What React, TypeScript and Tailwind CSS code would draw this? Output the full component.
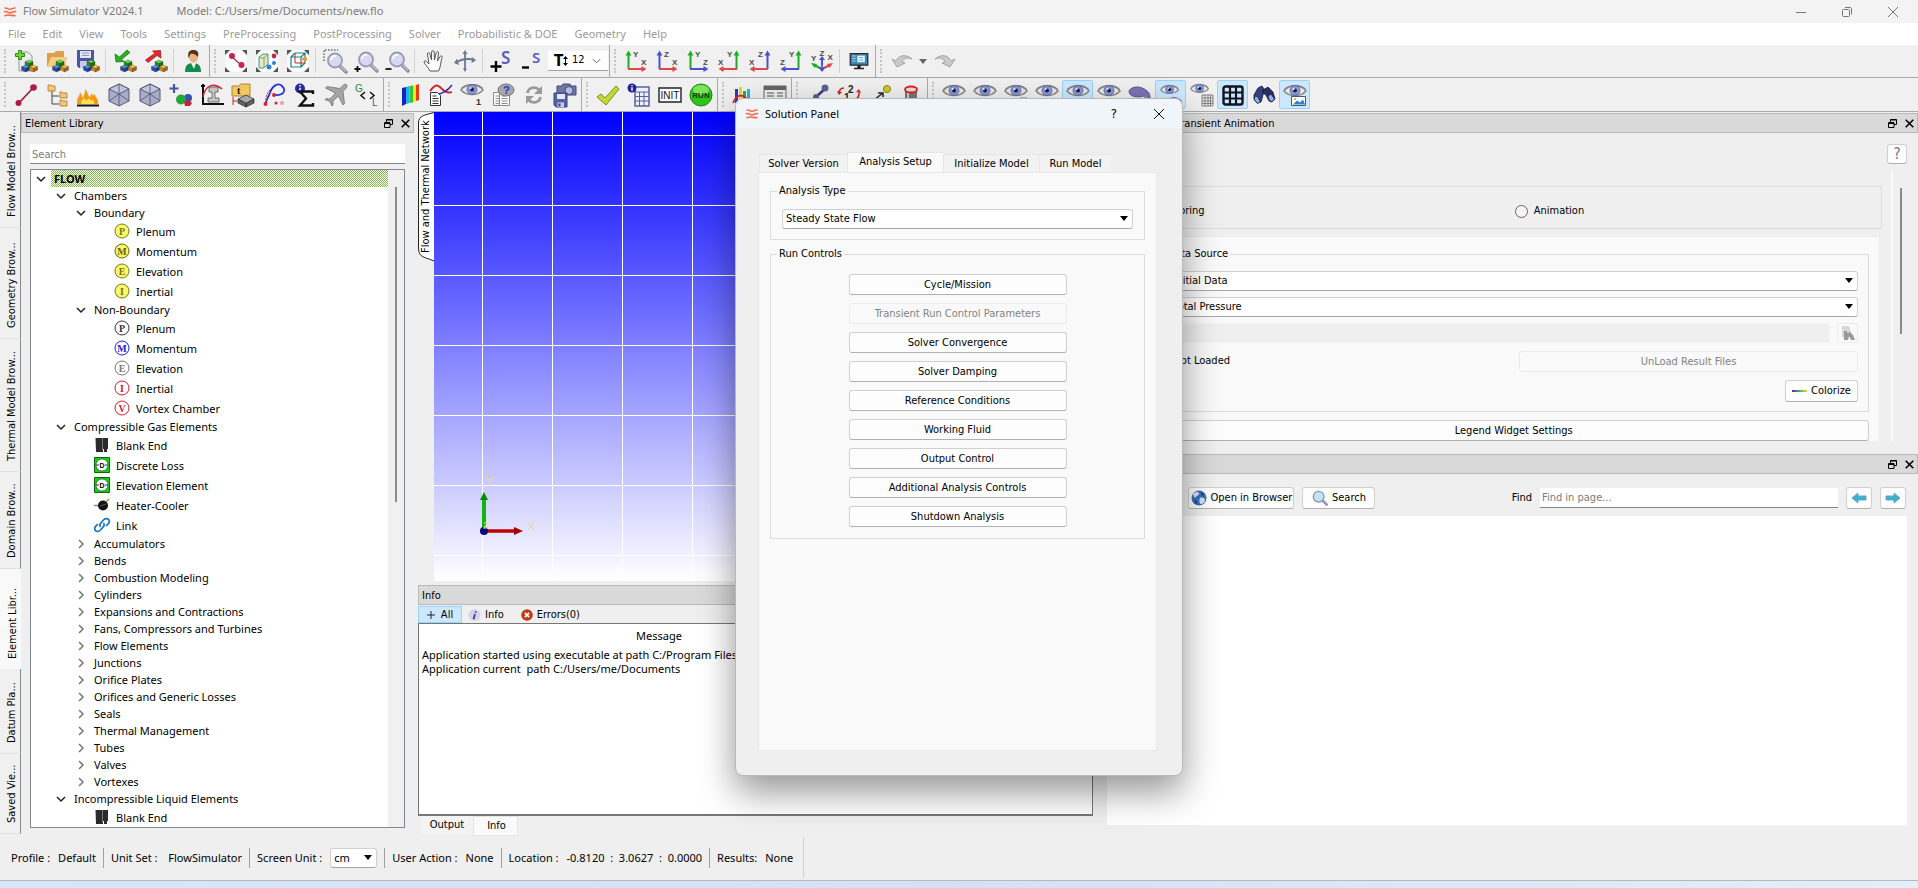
import { useState } from 'react';
import type { ReactNode } from 'react';
import clsx from 'clsx';

/* ---------- icon parts ---------- */

const Svg = ({ children, className = 'h-6 w-6' }: { children: ReactNode; className?: string }) => (
    <svg viewBox="0 0 24 24" fill="none" className={clsx('shrink-0 overflow-visible', className)} aria-hidden="true">
        {children}
    </svg>
);

const Block = ({ x, y, top, left, right }: { x: number; y: number; top: string; left: string; right: string }) => (
    <g stroke="#222" strokeWidth="0.3">
        <path d={`M${x} ${y - 3.4}l4 1.6-4 1.8-4-1.8z`} fill={top} />
        <path d={`M${x - 4} ${y - 1.8}l4 1.8v3.4l-4-1.8z`} fill={left} />
        <path d={`M${x + 4} ${y - 1.8}l-4 1.8v3.4l4-1.8z`} fill={right} />
    </g>
);

const Blocks = () => (
    <>
        <Block x={15} y={14.5} top="#5fe04a" left="#1e9a1a" right="#137510" />
        <Block x={11.5} y={19.5} top="#5b8fe8" left="#1d4fb4" right="#123a8c" />
        <Block x={19.5} y={19.5} top="#ffc24a" left="#d98a10" right="#a96505" />
    </>
);

const EyeShape = () => (
    <>
        <path d="M1 11C5 5 18 4 23 11 18 17 6 17 1 11z" fill="#e9e9ee" stroke="#8a8a8a" strokeWidth="1.5" />
        <path d="M1 9.5C6 4 18 4 23 9.5" stroke="#777" strokeWidth="1" />
        <circle cx="12" cy="10.5" r="5" fill="#8898d0" stroke="#5a659c" strokeWidth="0.8" />
        <circle cx="12" cy="10.5" r="2" fill="#1b1d52" />
        <circle cx="10.6" cy="9" r="1" fill="#fff" />
    </>
);

const Lens = () => (
    <>
        <path d="M15.5 15.5l6.5 6.5" stroke="#8b8b9c" strokeWidth="3.4" strokeLinecap="round" />
        <path d="M16.5 16l5 5" stroke="#c4c4d2" strokeWidth="1.2" strokeLinecap="round" />
        <circle cx="11" cy="10.5" r="7" fill="#d7d9f3" stroke="#9a9ab4" strokeWidth="1.8" />
        <path d="M6.8 9.5a4.6 4.6 0 0 1 5-3.6" stroke="#fff" strokeWidth="1.6" strokeLinecap="round" />
    </>
);

const Corners = () => (
    <>
        <rect x="1.5" y="1.5" width="21" height="21" rx="7" fill="#fff" />
        <g fill="#555">
            <path d="M1 1h5L1 6zM23 1h-5l5 5zM1 23h5l-5-5zM23 23h-5l5-5z" />
        </g>
    </>
);

const GREEN = '#18b020';
const RED = '#e0464c';
const BLUE = '#4a50d0';

interface AxesProps {
    up: string;
    side: string;
    upColor: string;
    sideColor: string;
    flip?: boolean;
}

const Axes = ({ up, side, upColor, sideColor, flip }: AxesProps) => (
    <Svg>
        <g transform={flip ? 'translate(24 0) scale(-1 1)' : undefined}>
            <path d="M4.5 20V5" stroke={upColor} strokeWidth="2" />
            <path d="M1.5 6.5l3-5 3 5z" fill={upColor} />
            <path d="M4 20h14" stroke={sideColor} strokeWidth="2" />
            <path d="M17.5 17l5 3-5 3z" fill={sideColor} />
        </g>
        <g fill="#4a4a4a" fontFamily="Liberation Sans" fontWeight="700" fontSize="8">
            <text x={flip ? 10 : 9} y="8">{up}</text>
            <text x={flip ? 1 : 17} y="16">{side}</text>
        </g>
    </Svg>
);

const Cube = () => (
    <Svg>
        <path d="M12 1l10 5v12l-10 5-10-5V6z" fill="#a9abc9" stroke="#555a78" />
        <path d="M12 1l10 5-10 5L2 6z" fill="#c3c5dc" stroke="#555a78" />
        <path d="M12 11v12M12 11V1M2 18l10-7 10 7" stroke="#555a78" strokeWidth="0.9" />
    </Svg>
);

const WaveLogo = ({ className }: { className?: string }) => (
    <svg viewBox="0 0 16 12" className={clsx('shrink-0', className)} fill="none" stroke="#f4694b" strokeWidth="1.9" aria-hidden="true">
        <path d="M1.500 1.500C4 .5 5.500 2.800 8 2.800s4-2.300 6.500-1.300M.5 5.800C4 4.300 5.500 7 8 7s4-2.700 7.500-1.200M1.500 10.800C4 9.200 6 9.500 8 10s4-.8 6.500.8" />
    </svg>
);

const FloppyShape = ({ x = 0, y = 0 }: { x?: number; y?: number }) => (
    <g transform={`translate(${x} ${y})`}>
        <path d="M1 1h13v14H3l-2-2z" fill="#5560a8" stroke="#3a4280" />
        <path d="M4 2h8v5H4z" fill="#e6e8f6" />
        <path d="M4.500 10.500h6.500V15H4.500z" fill="#c9cdf0" />
        <path d="M5.500 11.500h2v3h-2z" fill="#333a78" />
    </g>
);

const PageShape = ({ x, y, color = '#333' }: { x: number; y: number; color?: string }) => (
    <g transform={`translate(${x} ${y})`} stroke={color}>
        <path d="M.5.500h7l3 3v10H.5z" fill="#fff" />
        <path d="M2.500 4h4M2.500 6.500h6M2.500 9h6M2.500 11.500h6" strokeWidth="1.100" />
    </g>
);

const icons: Record<string, ReactNode> = {
    newModel: (
        <Svg>
            <path d="M5 3h9l4 4v15H5z" fill="#ececec" stroke="#999" />
            <path d="M4.500 1.500h3v3h3v3h-3v3h-3v-3h-3v-3h3z" fill="#6fd235" stroke="#2f8a13" />
            <Blocks />
        </Svg>
    ),
    openModel: (
        <Svg>
            <path d="M2 4h7l2-2h8v6h3l-3 10H2z" fill="#d9a14b" />
            <path d="M2 18l4-10h16l-4 10z" fill="#f5cf86" />
            <Blocks />
        </Svg>
    ),
    saveModel: (
        <Svg>
            <path d="M1 1h17v18H3l-2-2z" fill="#4b569c" />
            <path d="M4 2h11v7H4z" fill="#e4e6f4" />
            <path d="M6 4h7M6 6.500h7" stroke="#8d93bd" />
            <path d="M4 12h7v7H4z" fill="#c6cbec" />
            <Blocks />
        </Svg>
    ),
    importModel: (
        <Svg>
            <path d="M2 5l1 8 8-.5-2.300-2.200L17 3.500 14 1 6.500 8z" fill="#27b21d" stroke="#146b0e" strokeWidth="0.7" />
            <Blocks />
        </Svg>
    ),
    exportModel: (
        <Svg>
            <path d="M17 9l-.5-7.500-8 .5L11 4.200 1.500 11 4 13.500l9-7z" fill="#e3282c" stroke="#8d1215" strokeWidth="0.7" />
            <Blocks />
        </Svg>
    ),
    user: (
        <Svg>
            <path d="M4 23c0-7 3-9 8-9s8 2 8 9z" fill="#168c4c" />
            <path d="M10 14h5l-2 6z" fill="#f2f2f2" />
            <ellipse cx="12.500" cy="8" rx="4.500" ry="5.800" fill="#e9b184" />
            <path d="M7.500 9C6 3 9 .5 13 1c4.500.3 5 4 3.800 7C15 5 11 4 9.500 5z" fill="#5a3413" />
        </Svg>
    ),
    fitNodes: (
        <Svg>
            <Corners />
            <path d="M7 7l10 9" stroke="#a0304c" strokeWidth="1.200" />
            <circle cx="8" cy="7" r="3" fill="#c8244c" />
            <circle cx="17.500" cy="16" r="3" fill="#c8244c" />
        </Svg>
    ),
    fitAll: (
        <Svg>
            <Corners />
            <path d="M4 8l4-3h5v10l-4 4H4z" fill="#d5ecd5" stroke="#2a9a8e" />
            <path d="M9 9v10M4 9h5l4-4" stroke="#d08a2c" />
            <circle cx="19" cy="7" r="2.400" fill="#c8244c" />
            <circle cx="14" cy="18" r="2.500" fill="#2a7fe0" />
            <circle cx="19" cy="14" r="2" fill="#2a7fe0" />
        </Svg>
    ),
    fitGeometry: (
        <Svg>
            <Corners />
            <path d="M5 8h10v10H5zM5 8l4-4h10v10l-4 4M15 8l4-4" stroke="#16808c" strokeWidth="1.200" />
            <path d="M9 4v10h10" stroke="#c22" />
            <path d="M15 10h6" stroke="#f0a018" strokeWidth="3" />
        </Svg>
    ),
    zoomBox: (
        <Svg>
            <g transform="translate(1 1)"><Lens /></g>
            <path d="M1 12V1h14" stroke="#222" strokeDasharray="1.500 1.500" />
        </Svg>
    ),
    zoomIn: (
        <Svg>
            <g transform="translate(1 0)"><Lens /></g>
            <path d="M3.500 17v6M.5 20h6" stroke="#111" strokeWidth="1.800" />
        </Svg>
    ),
    zoomOut: (
        <Svg>
            <g transform="translate(1 0)"><Lens /></g>
            <path d="M.5 20h6" stroke="#111" strokeWidth="1.800" />
        </Svg>
    ),
    pan: (
        <Svg>
            <path
                d="M8 22c-1-3-5-6-6-9 0-1.500 2-1.500 3 0l2 2L5.500 5c0-1.800 2-1.800 2.400 0L9.500 11 9.600 3c0-1.800 2.400-1.800 2.500 0l.4 8 1.800-7.500c.5-1.600 2.500-1.200 2.200.5L15.500 12l2.500-4.500c1-1.300 2.700-.4 2 1.200-1.500 4-1 9-3.500 13.300z"
                fill="#fff"
                stroke="#555"
            />
        </Svg>
    ),
    rotate: (
        <Svg>
            <g stroke="#6c7894" strokeWidth="1.800">
                <path d="M12 3v18M3 14c4-4 13-5 19-3" />
            </g>
            <path d="M9.500 5L12 1l2.500 4zM10 19.500l2 3.500 2-3.500zM4 9.500L1 14l5 2zM19 8l4 3.500-4.500 2.500z" fill="#6c7894" />
        </Svg>
    ),
    sizeUp: (
        <Svg>
            <path d="M6 12v11M.5 17.500h11" stroke="#000" strokeWidth="2.400" />
            <text x="11" y="15" fontFamily="Noto Sans" fontSize="17" fontWeight="600" fill="#5a5ec0">S</text>
        </Svg>
    ),
    sizeDown: (
        <Svg>
            <path d="M1 18.500h7" stroke="#000" strokeWidth="2.400" />
            <text x="11" y="14" fontFamily="Noto Sans" fontSize="15" fontWeight="600" fill="#5a5ec0">S</text>
        </Svg>
    ),
    yx: <Axes up="Y" side="X" upColor={GREEN} sideColor={RED} />,
    zx: <Axes up="Z" side="X" upColor={BLUE} sideColor={RED} />,
    yz: <Axes up="Y" side="Z" upColor={GREEN} sideColor={BLUE} />,
    xy: <Axes up="Y" side="X" upColor={GREEN} sideColor={RED} flip />,
    xz: <Axes up="Z" side="X" upColor={BLUE} sideColor={RED} flip />,
    zy: <Axes up="Y" side="Z" upColor={GREEN} sideColor={BLUE} flip />,
    iso: (
        <Svg>
            <path d="M12 17V10" stroke={BLUE} strokeWidth="2" />
            <path d="M9 11l3-4 3 4z" fill={BLUE} />
            <path d="M12 20l-7-3.500" stroke={GREEN} strokeWidth="2.200" />
            <path d="M1 14l6 1-2.500 4z" fill={GREEN} />
            <path d="M12 20l7-3.500" stroke={RED} strokeWidth="2.200" />
            <path d="M23 14l-6 1 2.500 4z" fill={RED} />
            <path d="M9 19l3-2 3 2-3 4z" fill={BLUE} />
            <g fill="#4a4a4a" fontFamily="Liberation Sans" fontWeight="700" fontSize="8">
                <text x="1" y="12">Y</text>
                <text x="9.500" y="6.500">Z</text>
                <text x="17.500" y="11">X</text>
            </g>
        </Svg>
    ),
    screen: (
        <Svg className="h-5 w-5">
            <path d="M1.500 3h21v14h-21z" fill="#3f86b5" stroke="#1e2c38" strokeWidth="1.500" />
            <path d="M4 6h4M4 9h4M4 12h4" stroke="#cfe6f5" />
            <path d="M10 5.500h9v8h-9z" fill="#e8f3fa" />
            <path d="M12 8h5M12 11h5" stroke="#5b9ac5" />
            <path d="M10 17h4v3h4v2H6v-2h4z" fill="#222" />
        </Svg>
    ),
    undo: (
        <Svg>
            <path d="M6 12C8 7 15 4 22 10c-5-2-8-1-10 3l3 1-8 4-5-8z" fill="#c9c9c9" stroke="#a4a4a4" />
        </Svg>
    ),
    redo: (
        <Svg>
            <path d="M18 12C16 7 9 4 2 10c5-2 8-1 10 3l-3 1 8 4 5-8z" fill="#c9c9c9" stroke="#a4a4a4" />
        </Svg>
    ),
    link: (
        <Svg>
            <path d="M4 21L19 5" stroke="#8d2741" strokeWidth="1.800" />
            <circle cx="4.500" cy="20" r="3" fill="#b21a42" />
            <circle cx="19.500" cy="4.500" r="3.300" fill="#b21a42" />
        </Svg>
    ),
    tree: (
        <Svg>
            <path d="M7 7v14h7M7 13h7" stroke="#444" />
            <g fill="#f1c878" stroke="#a9762a" strokeWidth="0.8">
                <path d="M3 2h3l1 1h3v5H3zM15 9h2l1 1h4v5h-7zM15 17h2l1 1h4v5h-7z" />
            </g>
        </Svg>
    ),
    fire: (
        <Svg>
            <path d="M1 21C1 12 3 16 4 9c2 3 2 5 3 6 1-4 2-4 2-9 4 4 3 8 5 8 1-2 1-3 2-4 0 3 2 3 3 1 0 3 4 5 3 10z" fill="#f59a14" />
            <path d="M5 21c0-5 2-3 3-6 2 2 2 4 4 1 1-2 2 2 4 1 2 1 3 2 2 4z" fill="#ffe254" />
            <path d="M1 21.500h22v2H1z" fill="#1c1208" />
        </Svg>
    ),
    cube: <Cube />,
    addBodies: (
        <Svg>
            <path d="M5 1v9M.5 5.500h9" stroke="#4a55a0" strokeWidth="2.200" />
            <circle cx="19" cy="15" r="4" fill="#3550b8" />
            <circle cx="12" cy="16.500" r="5" fill="#21a83a" />
            <path d="M15 19l5-2 3 3-2 3h-5z" fill="#cf2030" />
        </Svg>
    ),
    rig: (
        <Svg>
            <path d="M3 1v20h21M1 3h4" stroke="#111" strokeWidth="2" />
            <path d="M3 14C5 2 14-1 22 6" stroke="#d8202a" strokeWidth="1.500" />
            <path d="M9 4h9v5h-3v6h4v4H8v-4h4V9H9z" fill="#c4c4c4" stroke="#555" strokeWidth="0.800" />
        </Svg>
    ),
    timeBlock: (
        <Svg>
            <path d="M1 3h7l1.500-2H19v12H1z" fill="#f3c660" stroke="#b2872b" />
            <text x="6" y="11" fontFamily="Liberation Serif" fontWeight="700" fontSize="10" fill="#111">t</text>
            <path d="M2 14v8M2 18h4" stroke="#c22" />
            <path d="M7 16l8-4 8 4-8 4.500z" fill="#a8a8a8" stroke="#222" strokeWidth="0.7" />
            <path d="M7 16l8 4.500V24l-8-4zM23 16l-8 4.500V24l8-4z" fill="#666" stroke="#222" strokeWidth="0.7" />
        </Svg>
    ),
    curve: (
        <Svg>
            <path d="M8 10C10 3 16-1 20 3c5 5 1 10-8 9" stroke="#2733d6" strokeWidth="1.800" />
            <path d="M3 21C5 17 6 14 8 10" stroke="#2733d6" strokeWidth="1.800" />
            <path d="M4 20C3 14 6 8 9 6" stroke="#d82030" strokeDasharray="2 1" />
            <circle cx="3.500" cy="21" r="2" fill="#e0202c" />
            <circle cx="12" cy="12" r="2" fill="#e0202c" />
            <circle cx="14" cy="20" r="1.500" fill="#e0202c" />
            <circle cx="20" cy="20" r="2" fill="#f19aa4" />
        </Svg>
    ),
    sum: (
        <Svg>
            <circle cx="7" cy="5.500" r="5" fill="#2b2ba6" />
            <path d="M7 2v1.500M7 4.800V8.500" stroke="#fff" strokeWidth="1.500" />
            <path d="M20 11V8.500H7l6 7-6 7h13V20" stroke="#111" strokeWidth="2.400" />
        </Svg>
    ),
    plane: (
        <Svg>
            <path d="M22.500 1.500c-2-1-4 1-6.500 4L3 3.500 1.500 5l10 5-5.500 6-4-.5-1 1 5 2 2 4.500 1-1V18l5.500-5 4.500 9 1.500-1.500L19 8.500c3-3 5-5 3.500-7z" fill="#a5a5a5" stroke="#666" strokeWidth="0.700" />
        </Svg>
    ),
    global: (
        <Svg>
            <text x="0" y="9" fontFamily="Liberation Sans" fontSize="10" fill="#1f8a35">G</text>
            <path d="M10 9l-4 3.500 4 3.500M15 9l4 3.500-4 3.500" stroke="#111" strokeWidth="1.500" />
            <text x="17" y="23" fontFamily="Liberation Sans" fontSize="10" fill="#5053b5">L</text>
        </Svg>
    ),
    contour: (
        <Svg>
            <path d="M4 5l4-1v17l-4 2z" fill="#1024c8" />
            <path d="M8 4l3.500-1v17L8 21z" fill="#18b6e8" />
            <path d="M11.500 3L15 2.500v17l-3.500.5z" fill="#35c435" />
            <path d="M15 2.500L18 2v16l-3 1.500z" fill="#f5e51c" />
            <path d="M18 2l3-1v16l-3 1z" fill="#e83a14" />
        </Svg>
    ),
    plot: (
        <Svg>
            <path d="M1 8c6-8 8-6 12-2s7 4 10 3" stroke="#d8202a" strokeWidth="1.800" />
            <path d="M8 11c6 0 11-4 15-9" stroke="#2733c6" strokeWidth="1.500" />
            <PageShape x={1} y={9} />
        </Svg>
    ),
    eyeOne: (
        <Svg>
            <g transform="translate(0 -4)"><EyeShape /></g>
            <text x="16" y="22" fontFamily="Liberation Sans" fontWeight="700" fontSize="9" fill="#333">1</text>
        </Svg>
    ),
    helpPage: (
        <Svg>
            <PageShape x={2} y={9} color="#8a8a8a" />
            <PageShape x={8} y={9} color="#8a8a8a" />
            <ellipse cx="15" cy="7" rx="8" ry="6" fill="#a5a5ac" stroke="#777" />
            <text x="12" y="11" fontFamily="Liberation Sans" fontWeight="700" fontSize="11" fill="#1c35c4">?</text>
        </Svg>
    ),
    refresh: (
        <Svg>
            <path d="M5.500 10c1-6 8-7 12-3M18.500 14c-1 6-8 7-12 3" stroke="#999" strokeWidth="2.800" />
            <path d="M20 3v8h-8zM4 21v-8h8z" fill="#999" />
        </Svg>
    ),
    snapshot: (
        <Svg>
            <path d="M4 3h5l1-2h7l1 2h5v9H4z" fill="#6f76a8" stroke="#454b78" />
            <circle cx="16" cy="7.500" r="4" fill="#b9bdda" stroke="#454b78" />
            <FloppyShape x={0} y={9} />
        </Svg>
    ),
    check: (
        <Svg>
            <path d="M1 14l4-3 4 4L20 3l3 3L10 22z" fill="#c3d73a" stroke="#7c8c19" />
        </Svg>
    ),
    calc: (
        <Svg>
            <path d="M8 4h14v19H8z" fill="#eef0fa" stroke="#5a619c" strokeWidth="1.500" />
            <path d="M8 9h14M8 13.500h14M8 18h14M12.500 9v14M17 9v14" stroke="#5a619c" />
            <circle cx="5" cy="5" r="4.500" fill="#22229a" />
            <path d="M5 2v1.300M5 4.300v3.500" stroke="#fff" strokeWidth="1.400" />
        </Svg>
    ),
    init: (
        <Svg>
            <path d="M1 5h22v14H1z" fill="#fff" stroke="#222" strokeWidth="1.400" />
            <text x="12" y="15.500" textAnchor="middle" fontFamily="Liberation Sans" fontSize="10" fill="#111">INIT</text>
        </Svg>
    ),
    run: (
        <Svg>
            <circle cx="12" cy="12" r="11" fill="#2ec41c" stroke="#1c8a10" />
            <ellipse cx="12" cy="7" rx="8" ry="5" fill="#7be25e" />
            <text x="12" y="15" textAnchor="middle" fontFamily="Liberation Sans" fontWeight="700" fontSize="8" fill="#0c3a08">RUN</text>
        </Svg>
    ),
    bars: (
        <Svg>
            <path d="M3 6h3v14H3z" fill="#2a35d0" />
            <path d="M7 4h3v16H7z" fill="#e8d820" />
            <path d="M11 8h3v12h-3z" fill="#21b040" />
            <path d="M15 6h3v14h-3z" fill="#20b8d8" />
            <path d="M1 20c4-9 9-10 16-2" stroke="#d82020" strokeWidth="1.800" />
        </Svg>
    ),
    news: (
        <Svg>
            <path d="M1 3h22v18H1z" fill="#eee" stroke="#666" />
            <path d="M1 3h22v4H1z" fill="#666" />
            <path d="M4 10h7M4 13h7M4 16h7M14 10h6M14 13h6M14 16h6" stroke="#555" />
        </Svg>
    ),
    joint: (
        <Svg>
            <path d="M5 19l6-6 9-8" stroke="#3c4470" strokeWidth="2.500" />
            <circle cx="19" cy="5" r="3.500" fill="#5a6296" />
            <circle cx="10" cy="14" r="3" fill="#5a6296" />
        </Svg>
    ),
    renumber: (
        <Svg>
            <path d="M2 11c0-4 2-6 5-6M22 10c0 3-1 5-3 6" stroke="#d02020" strokeWidth="1.600" />
            <path d="M0 8l2 4 3-3zM19 9l3-3 2 4z" fill="#d02020" />
            <text x="11" y="10" fontFamily="Liberation Sans" fontWeight="700" fontSize="10" fill="#222">2</text>
            <text x="7" y="18" fontFamily="Liberation Sans" fontWeight="700" fontSize="10" fill="#222">1</text>
        </Svg>
    ),
    measure: (
        <Svg>
            <path d="M2 20l13-10M2 16v4h5M10 10h5v4" stroke="#222" strokeWidth="1.500" />
            <circle cx="19" cy="6" r="3.500" fill="#d4c920" stroke="#8a8210" />
        </Svg>
    ),
    cylinder: (
        <Svg>
            <path d="M6 6v14c0 3 12 3 12 0V6z" fill="#777" />
            <path d="M9 8v14" stroke="#ccc" strokeWidth="2" />
            <ellipse cx="12" cy="6.500" rx="6" ry="3" fill="#ddd" stroke="#e02020" strokeWidth="1.800" />
        </Svg>
    ),
    eye: <Svg><g transform="translate(0 -3)"><EyeShape /></g></Svg>,
    eyeMinus: <Svg><g transform="translate(0 -3)"><EyeShape /></g><path d="M17 16h4" stroke="#111" strokeWidth="1.500" /></Svg>,
    eyeT: <Svg><g transform="translate(0 -3)"><EyeShape /></g><path d="M16 15.500h7M19.500 16v6" stroke="#111" strokeWidth="1.500" /></Svg>,
    eyeC: <Svg><g transform="translate(0 -3)"><EyeShape /></g><path d="M22 17c-2-2-5-1-5 2s3 4 5 2" stroke="#111" strokeWidth="1.400" /></Svg>,
    body: (
        <Svg>
            <path d="M1 8c3-6 14-5 19 1 3 3 2 8 1 8-2-1-3-3-5-4-6 2-15 1-15-5z" fill="#7a75b4" stroke="#5a568e" />
            <path d="M16 13l2 8 5-4z" fill="#ddd" stroke="#888" />
        </Svg>
    ),
    eyeBody: (
        <Svg>
            <g transform="translate(1 -2) scale(.8)"><EyeShape /></g>
            <path d="M9 17c3-4 9-4 14 1v4H9z" fill="#7a75b4" />
        </Svg>
    ),
    eyeMesh: (
        <Svg>
            <g transform="translate(0 -3) scale(.8)"><EyeShape /></g>
            <path d="M12 12h11v11H12zM15 12v11M18 12v11M20.500 12v11M12 15h11M12 18h11M12 20.500h11" stroke="#777" strokeWidth="0.900" />
        </Svg>
    ),
    grid: (
        <Svg>
            <rect x="2.500" y="3.500" width="19" height="18" rx="2" stroke="#10141c" strokeWidth="2.400" />
            <path d="M9 3v19M15 3v19M2 9.500h20M2 15.500h20" stroke="#10141c" strokeWidth="2.200" />
        </Svg>
    ),
    find: (
        <Svg>
            <g stroke="#14163c" strokeWidth="0.800">
                <path d="M2 12l4-7 4-2 2 3-1 6-2 7-4 1-3-4z" fill="#39407e" />
                <path d="M11 7l5-3 5 5 2 7-3 3-3-1-3-6-3-2z" fill="#2a2f68" />
                <path d="M2.500 13l3 .5 3 5-3 2-3-3.500zM16 13l3-2 3.500 5-2.500 3-3-2z" fill="#8fb0ee" />
            </g>
        </Svg>
    ),
    eyePicture: (
        <Svg>
            <g transform="translate(0 -3)"><EyeShape /></g>
            <path d="M8.500 13.500h14v9h-14z" fill="#fff" stroke="#4a5a70" />
            <path d="M10 21.500l4-4 3 2 3-3 2 5z" fill="#2f7ed0" />
            <circle cx="12" cy="16" r="1" fill="#e8a020" />
        </Svg>
    ),
};

/* ---------- tool bars ---------- */

const ToolButton = ({ name, active }: { name: string; active?: boolean }) => (
    <button
        type="button"
        aria-label={name}
        className={clsx(
            'flex h-[29px] w-[31px] items-center justify-center rounded-[2px] border',
            active ? 'border-[#99d1ff] bg-[#cce8ff]' : 'border-transparent'
        )}
    >
        {icons[name]}
    </button>
);

// '|' stands for a thin separator, a trailing '*' marks a pressed button
const ToolGroup = ({ items, children, last }: { items: string[]; children?: ReactNode; last?: boolean }) => (
    <div className={clsx('flex items-center pr-px', !last && 'border-r border-[#a9a9a9]')}>
        <div className="flex w-[10px] justify-center self-stretch py-1">
            <div className="w-0 border-l-2 border-dotted border-[#c4c4c4]" />
        </div>
        {items.map((item, i) =>
            item === '|' ? (
                <div key={i} className="mx-[2px] h-6 w-[2px] border-l border-[#d0d0d0]" />
            ) : (
                <ToolButton key={i} name={item.replace('*', '')} active={item.endsWith('*')} />
            )
        )}
        {children}
    </div>
);

const Toolbars = () => (
    <div className="bg-[#f0f0f0]">
        <div className="flex h-[33px] border-b border-[#a9a9a9]">
            <ToolGroup items={['newModel', 'openModel', 'saveModel', '|', 'importModel', 'exportModel', '|', 'user']} />
            <ToolGroup items={['fitNodes', 'fitAll', 'fitGeometry', '|', 'zoomBox', 'zoomIn', 'zoomOut', '|', 'pan', 'rotate', '|', 'sizeUp', 'sizeDown']}>
                <label className="flex h-5 w-[60px] items-center border-b border-gray-400 bg-white pl-[6px]">
                    <span className="text-[15px] font-bold leading-5">T</span>
                    <svg viewBox="0 0 5 10" className="h-[10px] w-[5px]" aria-hidden="true">
                        <path d="M2.500 0L5 3H3v4h2l-2.500 3L0 7h2V3H0z" />
                    </svg>
                    <select aria-label="Text size" className="w-5 appearance-none text-center text-[11px]" defaultValue="12">
                        <option>12</option>
                        <option>14</option>
                    </select>
                    <svg viewBox="0 0 10 6" className="ml-1 h-[6px] w-[9px]" fill="none" stroke="#555" aria-hidden="true">
                        <path d="M1 1l4 4 4-4" />
                    </svg>
                </label>
            </ToolGroup>
            <ToolGroup items={['yx', 'zx', 'yz', 'xy', 'xz', 'zy', 'iso', '|', 'screen']} />
            <ToolGroup items={['undo']} last>
                <svg viewBox="0 0 8 5" className="mx-[2px] h-[5px] w-2" fill="#666" aria-hidden="true">
                    <path d="M0 0h8L4 5z" />
                </svg>
                <ToolButton name="redo" />
            </ToolGroup>
        </div>
        <div className="flex h-[34px] border-b border-[#a9a9a9]">
            <ToolGroup items={['link', 'tree', 'fire', 'cube', 'cube', 'addBodies', 'rig', 'timeBlock', 'curve', 'sum', 'plane', 'global']} />
            <ToolGroup items={['contour', 'plot', 'eyeOne', 'helpPage', 'refresh', 'snapshot']} />
            <ToolGroup items={['check', 'calc', 'init', 'run']} />
            <ToolGroup items={['bars', 'news']} />
            <ToolGroup items={['joint', 'renumber', 'measure', 'cylinder']} />
            <ToolGroup
                items={['eye', 'eyeMinus', 'eyeT', 'eyeC', 'eye*', 'eye', 'body', 'eyeBody*', 'eyeMesh', 'grid*', 'find', 'eyePicture*']}
                last
            />
        </div>
    </div>
);

/* ---------- shared controls ---------- */

const DockTitle = ({ title, buttons = true }: { title: string; buttons?: boolean }) => (
    <div className="flex h-5 shrink-0 items-center justify-between border border-[#b9b9b9] bg-[#d9d9d9] px-[3px] text-[11px] leading-4">
        <span className="pt-[2px]">{title}</span>
        {buttons && (
            <span className="flex gap-2">
                <button type="button" aria-label="Float">
                    <svg viewBox="0 0 9 9" className="h-[9px] w-[9px]" fill="none" stroke="#000" aria-hidden="true">
                        <path d="M2.500 3V.500h6v5H6M2.500 1h6M.5 3.500h5.500v5H.5zM.5 4.500h5.500" />
                    </svg>
                </button>
                <button type="button" aria-label="Close">
                    <svg viewBox="0 0 9 9" className="h-[9px] w-[9px]" fill="none" stroke="#000" strokeWidth="1.600" aria-hidden="true">
                        <path d="M.7.700l7.600 7.600M8.300.7L.7 8.300" />
                    </svg>
                </button>
            </span>
        )}
    </div>
);

const Combo = ({ label, value, className }: { label: string; value: string; className?: string }) => (
    <div className={clsx('relative', className)}>
        <select
            aria-label={label}
            className="h-5 w-full appearance-none rounded-[3px] border border-[#d0d0d0] border-b-[#a8a8a8] bg-white pl-[3px] text-[11px] leading-4"
        >
            <option>{value}</option>
        </select>
        <svg viewBox="0 0 8 5" className="pointer-events-none absolute right-[5px] top-[7px] h-[5px] w-2" aria-hidden="true">
            <path d="M0 0h8L4 5z" />
        </svg>
    </div>
);

const PushButton = ({ children, className, disabled }: { children: ReactNode; className?: string; disabled?: boolean }) => (
    <button
        type="button"
        disabled={disabled}
        className={clsx(
            'flex items-center justify-center gap-1 whitespace-nowrap rounded-[3px] border text-[11px] leading-4',
            disabled ? 'border-[#ebebeb] bg-[#f9f9f9] text-[#838383]' : 'border-[#d0d0d0] border-b-[#b0b0b0] bg-[#fdfdfd]',
            className
        )}
    >
        {children}
    </button>
);

/* ---------- left side ---------- */

const sideTabs = [
    { name: 'Flow Model Brow...', size: 'h-[116px]' },
    { name: 'Geometry Brow...', size: 'h-[111px]' },
    { name: 'Thermal Model Brow...', size: 'h-[133px]' },
    { name: 'Domain Brow...', size: 'h-[97px]' },
    { name: 'Element Libr...', size: 'h-[100px]', active: true },
    { name: 'Datum Pla...', size: 'h-[85px]' },
    { name: 'Saved Vie...', size: 'h-20' },
];

const SideTabs = () => (
    <div className="flex w-[21px] shrink-0 flex-col">
        {sideTabs.map((tab) => (
            <button
                key={tab.name}
                type="button"
                className={clsx(
                    'flex rotate-180 items-center justify-start whitespace-nowrap pr-[4px] pt-[10px] text-[11px] leading-4 [writing-mode:vertical-rl]',
                    tab.size,
                    tab.active ? 'bg-[#f9f9f9]' : 'border-l border-t border-l-[#8a8a8a] border-t-[#e0e0e0] bg-[#f0f0f0]'
                )}
            >
                {tab.name}
            </button>
        ))}
    </div>
);

interface TreeRow {
    name: string;
    depth: number;
    open?: boolean;
    icon?: ReactNode;
}

const Badge = ({ letter, color, fill = '#fff' }: { letter: string; color: string; fill?: string }) => (
    <svg viewBox="0 0 16 16" className="h-4 w-4 shrink-0" aria-hidden="true">
        <circle cx="8" cy="8" r="7" fill={fill} stroke={color} />
        <text x="8" y="11.500" textAnchor="middle" fontFamily="Liberation Serif" fontWeight="700" fontSize="10" fill={color}>
            {letter}
        </text>
    </svg>
);

const BlankEnd = (
    <svg viewBox="0 0 16 16" className="h-4 w-4 shrink-0" aria-hidden="true">
        <path d="M1.500 1H14v11h-1v3h-3v-3H9v3H2z" fill="#2b2b2b" />
        <path d="M8.500 1v12" stroke="#777" />
    </svg>
);

const Discrete = (
    <svg viewBox="0 0 16 16" className="h-4 w-4 shrink-0" aria-hidden="true">
        <path d="M.5.500h15v15H.5z" fill="#12d012" stroke="#0a6a0a" />
        <circle cx="8" cy="8" r="6" fill="#fff" stroke="#333" strokeWidth="0.600" />
        <path d="M2 8h3M11 8h3" stroke="#333" />
        <text x="8" y="10.500" textAnchor="middle" fontFamily="Liberation Sans" fontWeight="700" fontSize="7">D</text>
    </svg>
);

const Heater = (
    <svg viewBox="0 0 16 16" className="h-4 w-4 shrink-0" aria-hidden="true">
        <path d="M0 8.500h5" stroke="#888" strokeWidth="1.500" />
        <circle cx="9" cy="8.500" r="5" fill="#141414" />
        <path d="M12 5l3-3" stroke="#c8854a" strokeWidth="1.500" />
        <path d="M6 9l6-2" stroke="#777" strokeWidth="0.700" />
    </svg>
);

const LinkIcon = (
    <svg viewBox="0 0 16 16" className="h-4 w-4 shrink-0" fill="none" stroke="#1878c0" strokeWidth="1.700" aria-hidden="true">
        <path d="M6.500 10C5.500 8.500 5.800 7 7 5.800l3-3.300c1-1 3.500-1.500 4.600 0s.8 3-.4 4.300L12 9" />
        <path d="M9.500 6c1 1.500.7 3-.5 4.200l-3 3.300c-1 1-3.500 1.500-4.600 0s-.8-3 .4-4.300L4 7" />
    </svg>
);

const YELLOW = '#f8f86a';

const treeRows: TreeRow[] = [
    { name: 'Chambers', depth: 1, open: true },
    { name: 'Boundary', depth: 2, open: true },
    { name: 'Plenum', depth: 3, icon: <Badge letter="P" color="#77771a" fill={YELLOW} /> },
    { name: 'Momentum', depth: 3, icon: <Badge letter="M" color="#66660c" fill={YELLOW} /> },
    { name: 'Elevation', depth: 3, icon: <Badge letter="E" color="#77771a" fill={YELLOW} /> },
    { name: 'Inertial', depth: 3, icon: <Badge letter="I" color="#77771a" fill={YELLOW} /> },
    { name: 'Non-Boundary', depth: 2, open: true },
    { name: 'Plenum', depth: 3, icon: <Badge letter="P" color="#333" /> },
    { name: 'Momentum', depth: 3, icon: <Badge letter="M" color="#1a22d8" /> },
    { name: 'Elevation', depth: 3, icon: <Badge letter="E" color="#777" /> },
    { name: 'Inertial', depth: 3, icon: <Badge letter="I" color="#c8222c" /> },
    { name: 'Vortex Chamber', depth: 3, icon: <Badge letter="V" color="#d02028" /> },
    { name: 'Compressible Gas Elements', depth: 1, open: true },
    { name: 'Blank End', depth: 2, icon: BlankEnd },
    { name: 'Discrete Loss', depth: 2, icon: Discrete },
    { name: 'Elevation Element', depth: 2, icon: Discrete },
    { name: 'Heater-Cooler', depth: 2, icon: Heater },
    { name: 'Link', depth: 2, icon: LinkIcon },
    ...[
        'Accumulators',
        'Bends',
        'Combustion Modeling',
        'Cylinders',
        'Expansions and Contractions',
        'Fans, Compressors and Turbines',
        'Flow Elements',
        'Junctions',
        'Orifice Plates',
        'Orifices and Generic Losses',
        'Seals',
        'Thermal Management',
        'Tubes',
        'Valves',
        'Vortexes',
    ].map((name) => ({ name, depth: 2, open: false })),
    { name: 'Incompressible Liquid Elements', depth: 1, open: true },
    { name: 'Blank End', depth: 2, icon: BlankEnd },
];

const indents = ['', 'pl-5', 'pl-10', 'pl-[60px]'];

const Chevron = ({ open }: { open?: boolean }) => (
    <span className="flex w-5 shrink-0 items-center justify-center">
        <svg viewBox="0 0 10 10" className="h-[10px] w-[10px]" fill="none" stroke={open ? '#222' : '#777'} strokeWidth="1.500" aria-hidden="true">
            <path d={open ? 'M1 3l4 4 4-4' : 'M3 1l4 4-4 4'} />
        </svg>
    </span>
);

const ElementLibrary = () => (
    <section className="flex w-[393px] shrink-0 flex-col pb-2 pt-px">
        <DockTitle title="Element Library" />
        <div className="flex min-h-0 flex-1 flex-col px-[9px] pt-[11px]">
            <input
                aria-label="Search elements"
                placeholder="Search"
                className="h-5 shrink-0 border-b border-[#868686] bg-white px-[2px] pt-[2px] text-[11px] placeholder:text-[#7c7c7c]"
            />
            <div className="mt-[5px] flex min-h-0 flex-1 border border-[#828790] bg-white">
                <ul className="min-w-0 flex-1 overflow-hidden font-['Noto_Sans'] text-[11px] leading-[17px]">
                    <li className="flex h-[17px]">
                        <Chevron open />
                        <span className="flex-1 bg-[repeating-conic-gradient(#82bd45_0_25%,#fff_0_50%)] bg-[length:2px_2px] pl-[3px] font-bold">FLOW</span>
                    </li>
                    {treeRows.map((row, i) => (
                        <li key={i} className={clsx('flex items-center', row.icon ? 'h-5' : 'h-[17px]', indents[row.depth])}>
                            {row.icon ? (
                                <span className="ml-[23px] mr-[6px]">{row.icon}</span>
                            ) : (
                                <span className="mr-[3px]"><Chevron open={row.open} /></span>
                            )}
                            <span className="whitespace-nowrap">{row.name}</span>
                        </li>
                    ))}
                </ul>
                <div className="w-[16px] bg-[#f0f0f0] pt-[17px]">
                    <div className="ml-[7px] h-[315px] w-[2px] bg-[#8a8a8a]" />
                </div>
            </div>
        </div>
    </section>
);

/* ---------- middle ---------- */

const Viewport = () => (
    <div className="flex flex-1">
        <div className="relative w-4">
            <svg viewBox="0 0 16 150" className="h-[150px] w-4" fill="#fff" stroke="#222" aria-hidden="true">
                <path d="M16 .5C8 3 .5 3 .5 11v125c0 10 7 9 15.500 13" />
            </svg>
            <button type="button" className="absolute left-0 top-0 h-[150px] w-4 rotate-180 whitespace-nowrap text-[11px] leading-4 [writing-mode:vertical-rl]">
                Flow and Thermal Network
            </button>
        </div>
        <div className="relative flex-1 bg-[linear-gradient(to_right,#fff_1px,transparent_1px),linear-gradient(to_bottom,#fff_1px,transparent_1px),linear-gradient(to_bottom,#0000ff,#ffffff)] bg-[length:70px_70px,70px_70px,100%_100%] bg-[position:48px_0,0_23px,0_0]">
            <svg viewBox="0 0 64 70" className="absolute bottom-[38px] left-[42px] h-[70px] w-16" fill="none" aria-hidden="true">
                <path d="M8 58V26" stroke="#12b512" strokeWidth="4" />
                <path d="M4 27l4-8 4 8z" fill="#0c8c0c" />
                <path d="M8 58h32" stroke="#c00000" strokeWidth="3.500" />
                <path d="M38 54l9 4-9 4z" fill="#a00000" />
                <circle cx="8" cy="58" r="4" fill="#06067c" />
                <g stroke="#e6d9a0" strokeWidth="1.200">
                    <path d="M10 4l3.500 4L17 4M13.500 8v5M52 49l6 8M58 49l-6 8M8 50h4l-4 5h4" />
                </g>
            </svg>
        </div>
    </div>
);

const InfoDock = () => (
    <section className="flex h-[251px] shrink-0 flex-col">
        <DockTitle title="Info" buttons={false} />
        <div className="flex h-[18px] items-end text-[11px] leading-4">
            <button type="button" className="flex h-[17px] w-11 items-center justify-center gap-[6px] border border-[#99d1ff] bg-[#cce8ff]">
                <svg viewBox="0 0 8 8" className="h-2 w-2" stroke="#223" aria-hidden="true"><path d="M4 0v8M0 4h8" /></svg>
                All
            </button>
            <button type="button" className="ml-[6px] flex items-center gap-1">
                <svg viewBox="0 0 14 14" className="h-[13px] w-[13px]" aria-hidden="true">
                    <circle cx="7" cy="6.500" r="6.500" fill="#d4d6e2" />
                    <path d="M8.500 2.500L8 4M7.500 5.500L6 11" stroke="#3d3dc8" strokeWidth="2" />
                </svg>
                Info
            </button>
            <button type="button" className="ml-[17px] flex items-center gap-1">
                <svg viewBox="0 0 14 14" className="h-3 w-3" aria-hidden="true">
                    <circle cx="7" cy="7" r="6.800" fill="#c03a12" />
                    <path d="M4.500 4.500l5 5M9.500 4.500l-5 5" stroke="#fff" strokeWidth="2" />
                </svg>
                Errors(0)
            </button>
        </div>
        <div className="min-h-0 flex-1 overflow-hidden border border-b-2 border-[#777] bg-white">
            <table className="w-full font-['Noto_Sans'] text-[11px] leading-[14px]">
                <thead>
                    <tr>
                        <th className="h-6 w-[480px] font-normal">Message</th>
                        <th className="font-normal">Time</th>
                    </tr>
                </thead>
                <tbody className="whitespace-pre">
                    <tr><td className="pl-[3px]">Application started using executable at path C:/Program Files</td></tr>
                    <tr><td className="pl-[3px]">Application current  path C:/Users/me/Documents</td></tr>
                </tbody>
            </table>
        </div>
        <div className="flex h-[20px] pl-[3px] text-[11px] leading-4">
            <button type="button" className="h-[18px] w-[52px] bg-[#f3f3f3]">Output</button>
            <button type="button" className="h-5 w-[45px] border border-[#e5e5e5] bg-[#fafafa] pl-[2px]">Info</button>
        </div>
    </section>
);

/* ---------- right side ---------- */

const AnimationDock = () => (
    <section className="flex flex-col pt-px">
        <DockTitle title="Contour and Transient Animation" />
        <div className="flex justify-end px-[11px] pt-[11px]">
            <PushButton className="h-5 w-5"><span className="text-[15px] text-[#777]">?</span></PushButton>
        </div>
        <div className="flex pl-10 pt-[7px]">
            <div className="flex-1 pt-[15px]">
                <div className="flex h-[43px] items-center border border-[#dcdcdc] pt-2 text-[11px]">
                    <label className="flex w-1/2 items-center gap-[2px]">
                        <input type="radio" name="mode" defaultChecked className="h-[13px] w-[13px] appearance-none rounded-full border-4 border-[#0067c0]" />
                        Coloring
                    </label>
                    <label className="flex items-center gap-[6px]">
                        <input type="radio" name="mode" className="h-[13px] w-[13px] appearance-none rounded-full border border-[#666] bg-[#f5f5f5]" />
                        Animation
                    </label>
                </div>
                <div className="mr-[2px] mt-[7px] border border-b-0 border-[#ececec] bg-[#f9f9f9] px-[10px] pt-[9px]">
                    <fieldset className="border border-[#dcdcdc] px-[10px] pb-[9px] text-[11px]">
                        <legend className="ml-[-4px] px-[2px] leading-4">Data Source</legend>
                        <Combo label="Data source" value="Initial Data" className="mt-[9px]" />
                        <Combo label="Quantity" value="Total Pressure" className="mt-[6px]" />
                        <div className="mt-[6px] flex gap-[7px]">
                            <input aria-label="Result file" disabled className="h-5 min-w-0 flex-1 border border-[#f3f3f3] bg-[#efefef]" />
                            <PushButton className="h-5 w-[21px]" disabled>
                                <svg viewBox="0 0 16 16" className="h-4 w-4 shrink-0" aria-hidden="true">
                                    <path d="M2 1h6l2 2v9H2z" fill="#d8d8d8" />
                                    <path d="M4 6h3v2h2V6l4 4 2 5h-4l-2-4-1 4H4z" fill="#9a9a9a" />
                                </svg>
                            </PushButton>
                        </div>
                        <div className="mt-2 flex items-center justify-between">
                            <span className="pl-1">Not Loaded</span>
                            <PushButton className="h-[21px] w-[339px]" disabled>UnLoad Result Files</PushButton>
                        </div>
                        <div className="mt-2 flex justify-end">
                            <PushButton className="h-[22px] w-[73px]">
                                <span className="h-[2px] w-[15px] bg-linear-to-r from-[#4a2a8c] via-[#3fae5a] to-[#d8d84a]" />
                                Colorize
                            </PushButton>
                        </div>
                    </fieldset>
                    <PushButton className="mt-2 h-[21px] w-full">Legend Widget Settings</PushButton>
                </div>
            </div>
            <div className="ml-[9px] flex w-[27px] border-l-2 border-[#fafafa] pt-[17px]">
                <div className="ml-[7px] h-[146px] w-[2px] bg-[#8a8a8a]" />
            </div>
        </div>
    </section>
);

const Globe = () => (
    <svg viewBox="0 0 16 16" className="h-4 w-4" aria-hidden="true">
        <circle cx="8" cy="8" r="7.500" fill="#3a6fb8" />
        <path d="M2 4c3-3 5-2 6-1s-2 3-3 4-2 1-3-3zM9 8c2-1 5 0 5 2s-2 4-4 4-2-5-1-6z" fill="#d5e2f2" />
        <path d="M10 2l3 2-2 2zM3 10l3 2-1 2z" fill="#16365f" />
    </svg>
);

const ArrowIcon = ({ flip }: { flip?: boolean }) => (
    <svg viewBox="0 0 16 12" className={clsx('h-3 w-4', flip && 'rotate-180')} aria-hidden="true">
        <path d="M1 6l6-5v3h8v4H7v3z" fill="#35b1d2" stroke="#6aa9ba" />
    </svg>
);

const HelpDock = () => (
    <section className="mt-[13px] flex min-h-0 flex-1 flex-col">
        <DockTitle title="Help" />
        <div className="flex items-center gap-2 pb-[7px] pl-[3px] pr-[12px] pt-[13px] text-[11px]">
            <PushButton className="h-[22px] w-[31px]"><ArrowIcon /></PushButton>
            <PushButton className="h-[22px] w-[31px]"><ArrowIcon flip /></PushButton>
            <PushButton className="h-[22px] w-[106px]"><Globe />Open in Browser</PushButton>
            <PushButton className="h-[22px] w-[73px]">
                <svg viewBox="0 0 24 24" className="h-4 w-4" fill="none" aria-hidden="true">
                    <path d="M16 16l6 6" stroke="#8f98b8" strokeWidth="4" strokeLinecap="round" />
                    <circle cx="10" cy="10" r="8" fill="#c4e4f5" stroke="#8b97a8" strokeWidth="2" />
                </svg>
                Search
            </PushButton>
            <label className="ml-auto flex items-center gap-2">
                Find
                <input placeholder="Find in page..." className="h-5 w-[298px] border-b border-[#868686] bg-white px-[2px] placeholder:text-[#7c7c7c]" />
            </label>
            <PushButton className="h-[22px] w-[26px]"><ArrowIcon /></PushButton>
            <PushButton className="h-[22px] w-[26px]"><ArrowIcon flip /></PushButton>
        </div>
        <div className="mb-[11px] mr-[11px] flex-1 bg-white" />
    </section>
);

/* ---------- status bar ---------- */

const StatusItem = ({ label, value, end }: { label: string; value?: string; end?: ReactNode }) => (
    <div className="flex h-5 items-center gap-2 whitespace-pre border-r border-[#a0a0a0] pr-[7px] last:h-10 last:border-[#d0d0d0] last:pr-[10px]">
        <span>{label}</span>
        {value && <span>{value}</span>}
        {end}
    </div>
);

const StatusBar = () => (
    <footer className="shrink-0">
        <div className="flex h-[45px] items-center gap-[7px] border-b border-[#b4b8c0] pl-[11px] font-['Noto_Sans'] text-[11px] leading-4">
            <StatusItem label="Profile :" value="Default" />
            <StatusItem label="Unit Set :" value=" FlowSimulator" />
            <StatusItem label="Screen Unit :" end={<Combo label="Screen unit" value="cm" className="w-[47px]" />} />
            <StatusItem label="User Action :" value="None" />
            <StatusItem label="Location :" value="-0.8120  :  3.0627  :  0.0000" />
            <StatusItem label="Results:" value="None" />
        </div>
        <div className="h-[7px] bg-linear-to-r from-[#d8e6f8] via-[#d6e0f2] to-[#e4eef8]" />
    </footer>
);

/* ---------- dialog ---------- */

const runControls = [
    'Cycle/Mission',
    'Transient Run Control Parameters',
    'Solver Convergence',
    'Solver Damping',
    'Reference Conditions',
    'Working Fluid',
    'Output Control',
    'Additional Analysis Controls',
    'Shutdown Analysis',
];

const dialogTabs = [
    { name: 'Solver Version', size: 'w-[88px]' },
    { name: 'Analysis Setup', size: 'w-24' },
    { name: 'Initialize Model', size: 'w-24' },
    { name: 'Run Model', size: 'w-[72px]' },
];

const SolutionPanel = () => {
    const [tab, setTab] = useState('Analysis Setup');

    return (
        <div
            role="dialog"
            aria-label="Solution Panel"
            className="absolute left-1/2 top-[98px] w-[448px] -translate-x-1/2 rounded-lg border border-[#b8b8b8] bg-[#efefef] pb-[24px] shadow-[0_16px_36px_rgba(0,0,0,0.42)]"
        >
            <header className="flex h-[29px] items-center rounded-t-lg bg-[#f0f5fa] pl-[9px] pr-[17px]">
                <WaveLogo className="h-[10px] w-[14px]" />
                <h2 className="ml-[6px] font-['Noto_Sans'] text-[11px] leading-4">Solution Panel</h2>
                <button type="button" aria-label="Help" className="ml-auto text-[13px]">?</button>
                <button type="button" aria-label="Close" className="ml-9">
                    <svg viewBox="0 0 12 12" className="h-3 w-3" stroke="#111" aria-hidden="true">
                        <path d="M1 1l10 10M11 1L1 11" />
                    </svg>
                </button>
            </header>
            <div className="pl-[22px] pr-[25px] pt-[24px]">
                <div role="tablist" className="flex items-end pl-px text-[11px] leading-4">
                    {dialogTabs.map(({ name, size }) => (
                        <button
                            key={name}
                            type="button"
                            role="tab"
                            aria-selected={tab === name}
                            onClick={() => setTab(name)}
                            className={clsx(
                                'border-l border-t border-[#e6e6e6]',
                                size,
                                tab === name ? 'h-5 bg-[#f9f9f9] pb-[2px]' : 'h-[18px] bg-[#f2f2f2]'
                            )}
                        >
                            {name}
                        </button>
                    ))}
                </div>
                <div className="min-h-[579px] border border-[#e8e8e8] bg-[#f9f9f9] px-[11px] pt-[10px] text-[11px]">
                    <fieldset className="border border-[#dcdcdc] px-[11px] pb-[10px]">
                        <legend className="ml-[-5px] px-[2px] leading-4">Analysis Type</legend>
                        <Combo label="Analysis type" value="Steady State Flow" className="mt-[10px]" />
                    </fieldset>
                    <fieldset className="mt-[6px] border border-[#dcdcdc] px-[11px] pb-[11px]">
                        <legend className="ml-[-5px] px-[2px] leading-4">Run Controls</legend>
                        <div className="flex flex-col items-center gap-2 pt-3">
                            {runControls.map((name) => (
                                <PushButton key={name} className="h-[21px] w-[218px]" disabled={name.startsWith('Transient')}>
                                    {name}
                                </PushButton>
                            ))}
                        </div>
                    </fieldset>
                </div>
            </div>
        </div>
    );
};

const menus = ['File', 'Edit', 'View', 'Tools', 'Settings', 'PreProcessing', 'PostProcessing', 'Solver', 'Probabilistic & DOE', 'Geometry', 'Help'];

const App = () => (
    <div className="relative flex h-screen flex-col overflow-hidden bg-[#efefef] font-['DejaVu_Sans_Condensed','Noto_Sans',sans-serif] text-black">
        {/* Window caption */}
        <header className="flex h-[23px] shrink-0 items-center bg-[#f3f3f3] pl-[3px] pr-5 font-['Noto_Sans'] text-[11px] text-[#7a7a7a]">
            <WaveLogo className="h-[10px] w-[14px]" />
            <span className="ml-[6px]">Flow Simulator V2024.1</span>
            <span className="ml-[33px]">Model: C:/Users/me/Documents/new.flo</span>
            <span className="ml-auto flex items-center gap-9">
                <button type="button" aria-label="Minimize">
                    <svg viewBox="0 0 10 10" className="h-[10px] w-[10px]" stroke="#777" aria-hidden="true"><path d="M0 5.500h10" /></svg>
                </button>
                <button type="button" aria-label="Restore">
                    <svg viewBox="0 0 10 10" className="h-[10px] w-[10px]" fill="none" stroke="#777" aria-hidden="true">
                        <rect x=".5" y="2.500" width="7" height="7" rx="1" />
                        <path d="M3 .500h5c1 0 1.500.5 1.500 1.500v5.500" />
                    </svg>
                </button>
                <button type="button" aria-label="Close window">
                    <svg viewBox="0 0 10 10" className="h-[10px] w-[10px]" stroke="#777" aria-hidden="true"><path d="M0 0l10 10M10 0L0 10" /></svg>
                </button>
            </span>
        </header>

        {/* Menu */}
        <nav className="flex h-[22px] shrink-0 items-center gap-[17px] bg-white pl-2 font-['Noto_Sans'] text-[11px] text-[#9a9a9a]">
            {menus.map((menu) => (
                <button key={menu} type="button">{menu}</button>
            ))}
        </nav>
        <Toolbars />

        <main className="flex min-h-0 flex-1">
            <SideTabs />
            <ElementLibrary />
            <div className="ml-1 flex min-w-0 flex-5 flex-col">
                <Viewport />
                <div className="h-1" />
                <InfoDock />
            </div>
            <div className="ml-[14px] flex min-w-0 flex-6 flex-col">
                <AnimationDock />
                <HelpDock />
            </div>
        </main>
        <StatusBar />
        <SolutionPanel />
    </div>
);

export default App;
